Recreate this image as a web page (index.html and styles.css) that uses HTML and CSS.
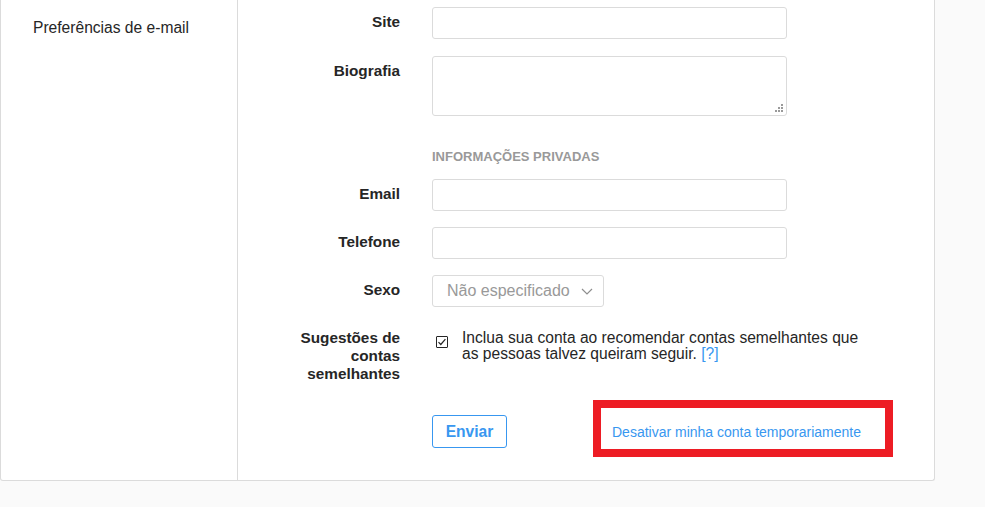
FILE: index.html
```html
<!DOCTYPE html>
<html lang="pt">
<head>
<meta charset="utf-8">
<title>Editar perfil</title>
<link rel="stylesheet" href="styles.css">
</head>
<body>
<div class="card">
  <aside class="side">
    <a class="side-item" href="#">Preferências de e-mail</a>
  </aside>
  <main class="form">
    <div class="row row-first">
      <label class="label">Site</label>
      <input class="input" type="text">
    </div>
    <div class="row">
      <label class="label">Biografia</label>
      <div class="textarea">
        <svg class="grip" width="8" height="8" viewBox="0 0 8 8"><rect x="6" y="0" width="2" height="2"/><rect x="3" y="3" width="2" height="2"/><rect x="6" y="3" width="2" height="2"/><rect x="0" y="6" width="2" height="2"/><rect x="3" y="6" width="2" height="2"/><rect x="6" y="6" width="2" height="2"/></svg>
      </div>
    </div>
    <div class="row row-section">
      <span></span>
      <h2 class="section">Informações privadas</h2>
    </div>
    <div class="row">
      <label class="label">Email</label>
      <input class="input" type="text">
    </div>
    <div class="row">
      <label class="label">Telefone</label>
      <input class="input" type="text">
    </div>
    <div class="row">
      <label class="label">Sexo</label>
      <div class="select">
        <span>Não especificado</span>
        <svg class="chev" width="12" height="7" viewBox="0 0 12 7"><path d="M1 1l5 5 5-5" fill="none" stroke="#8e8e8e" stroke-width="1.2"/></svg>
      </div>
    </div>
    <div class="row">
      <label class="label">Sugestões de contas semelhantes</label>
      <div class="check-row">
        <span class="checkbox"><svg width="10" height="10" viewBox="0 0 10 10"><path d="M1.5 5.2l2.3 2.3 4.6-5.4" fill="none" stroke="#262626" stroke-width="1.2"/></svg></span>
        <p class="check-text">Inclua sua conta ao recomendar contas semelhantes que<br>as pessoas talvez queiram seguir. <a href="#" class="help">[?]</a></p>
      </div>
    </div>
    <div class="row row-submit">
      <span></span>
      <div class="actions">
        <button class="btn" type="button">Enviar</button>
        <span class="highlight"><a href="#" class="link">Desativar minha conta temporariamente</a></span>
      </div>
    </div>
  </main>
</div>
</body>
</html>
```
FILE: styles.css
```css
* { box-sizing: border-box; }
html, body {
  margin: 0;
  background: #fafafa;
  font-family: "Liberation Sans", Arial, sans-serif;
  color: #262626;
}
.card {
  width: 935px;
  display: flex;
  background: #fff;
  border: 1px solid #dbdbdb;
  border-top: none;
  border-radius: 0 0 3px 3px;
}
.side {
  width: 237px;
  flex: none;
  border-right: 1px solid #dbdbdb;
  padding: 18px 0 0 32px;
}
.side-item {
  display: block;
  font-size: 15.6px;
  line-height: 20px;
  color: #262626;
  text-decoration: none;
}
.form {
  flex: 1;
  padding: 7px 0 23px 0;
}
.row {
  display: grid;
  grid-template-columns: 162px 355px;
  column-gap: 32px;
  margin-bottom: 16px;
}
.row-first { margin-bottom: 17px; }
.row-section { margin-bottom: 0; }
.label {
  text-align: right;
  font-weight: 700;
  font-size: 15.3px;
  line-height: 18px;
  padding-top: 6px;
  padding-left: 50px;
}
.input {
  display: block;
  width: 355px;
  height: 32px;
  border: 1px solid #dbdbdb;
  border-radius: 3px;
  background: #fff;
  margin: 0;
  padding: 0 10px;
  font: inherit;
}
.textarea {
  position: relative;
  height: 60px;
  border: 1px solid #dbdbdb;
  border-radius: 3px;
}
.grip {
  position: absolute;
  right: 3px;
  bottom: 3px;
  fill: #9a9a9a;
}
.section {
  margin: 0;
  padding: 16px 0 13px;
  font-size: 13px;
  line-height: 18px;
  font-weight: 700;
  text-transform: uppercase;
  color: #999;
}
.select {
  width: 172px;
  height: 32px;
  border: 1px solid #dbdbdb;
  border-radius: 3px;
  display: flex;
  align-items: center;
  padding: 0 10px 0 14px;
  justify-content: space-between;
  color: #999;
  font-size: 16px;
}
.chev { margin-top: 1px; }
.check-row {
  display: flex;
  align-items: flex-start;
  width: 440px;
  padding-top: 7px;
}
.checkbox {
  flex: none;
  width: 12px;
  height: 12px;
  margin: 6px 14px 0 4px;
  border: 1px solid #262626;
  border-radius: 1px;
  display: flex;
  align-items: center;
  justify-content: center;
}
.check-text {
  margin: 0;
  width: 410px;
  font-size: 15.6px;
  line-height: 16px;
}
.help { color: #3897f0; text-decoration: none; }
.row-submit { margin: 17px 0 0; }
.actions {
  display: flex;
  align-items: flex-start;
  width: 470px;
}
.btn {
  margin-top: 15px;
  width: 75px;
  height: 33px;
  border: 1px solid #3897f0;
  border-radius: 3px;
  background: #fff;
  color: #3897f0;
  font: inherit;
  font-weight: 700;
  font-size: 15.6px;
  padding: 0;
}
.highlight {
  margin-left: 86px;
  width: 300px;
  height: 57px;
  border: 8px solid #ed1c24;
  padding: 15px 0 0 11px;
}
.link {
  font-size: 14px;
  line-height: 18px;
  color: #3897f0;
  text-decoration: none;
}
```
